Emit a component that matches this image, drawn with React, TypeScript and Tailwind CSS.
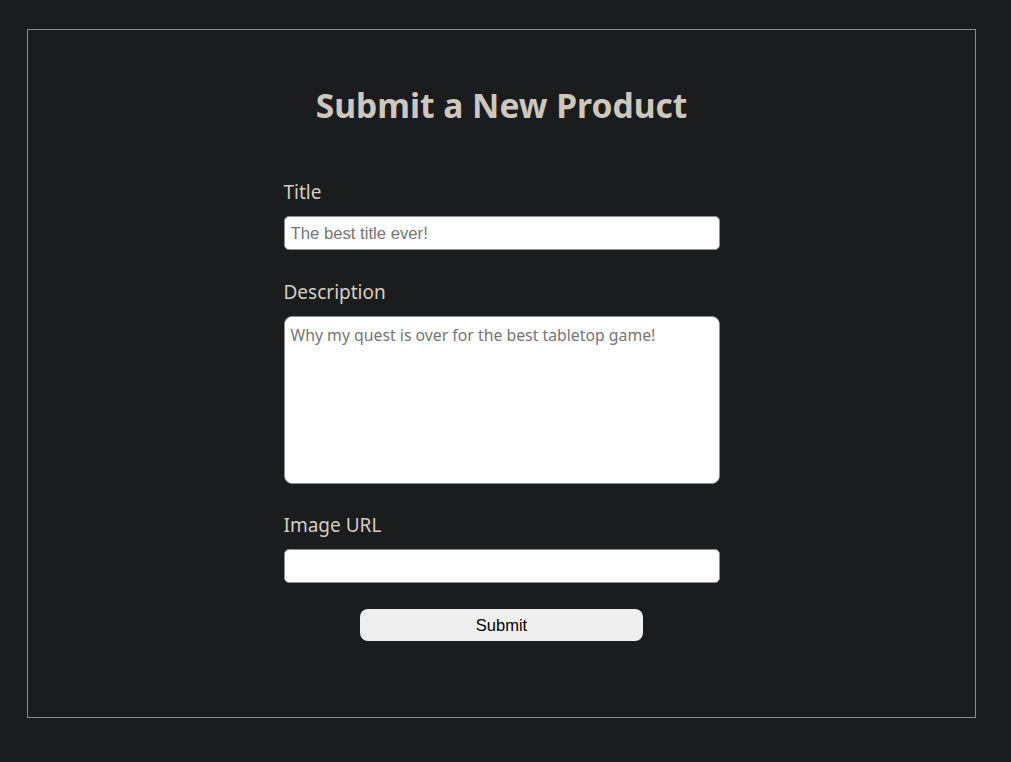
export default function App() {
  return (
    <div className="min-h-[762px] bg-[#1b1c1e] pt-[29px] pl-[27px] pb-[44px]" style={{ fontFamily: '"Noto Sans", sans-serif' }}>
      <div className="h-[689px] w-[949px] border border-[#8c8c8c] pt-[54px]">
        <h1 className="text-center text-[33.6px] leading-[42px] font-bold text-[#cdc7bd]">Submit a New Product</h1>
        <form className="mx-auto mt-[52px] flex w-[436px] flex-col" onSubmit={(e) => e.preventDefault()}>
          <label className="mb-[10px] block text-[19px] leading-[28px] text-[#d4cec3]">Title</label>
          <input
            type="text"
            placeholder="The best title ever!"
            className="h-[34px] w-full rounded-[5px] border border-[#8f8f8f] bg-white px-[6px] pt-[1px] text-[16.7px] text-black placeholder:text-[#757575]"
            style={{ fontFamily: '"Liberation Sans", Arial, sans-serif' }}
          />
          <label className="mt-[28px] mb-[10px] block text-[19px] leading-[28px] text-[#d4cec3]">Description</label>
          <textarea
            placeholder="Why my quest is over for the best tabletop game!"
            className="block h-[168px] w-full resize-none rounded-[8px] border border-[#8f8f8f] bg-white px-[6px] pt-[7px] pb-[6px] text-[15.8px] leading-[22px] text-black placeholder:text-[#757575]"
          />
          <label className="mt-[27px] mb-[10px] block text-[19px] leading-[28px] text-[#d4cec3]">Image URL</label>
          <input
            type="text"
            className="h-[34px] w-full rounded-[5px] border border-[#8f8f8f] bg-white px-[6px] text-[16.7px] text-black"
            style={{ fontFamily: '"Liberation Sans", Arial, sans-serif' }}
          />
          <button
            type="submit"
            className="mx-auto mt-[26px] h-[32px] w-[283px] rounded-[8px] bg-[#efefef] text-[16.5px] text-black"
            style={{ fontFamily: '"Liberation Sans", Arial, sans-serif' }}
          >
            Submit
          </button>
        </form>
      </div>
    </div>
  );
}
